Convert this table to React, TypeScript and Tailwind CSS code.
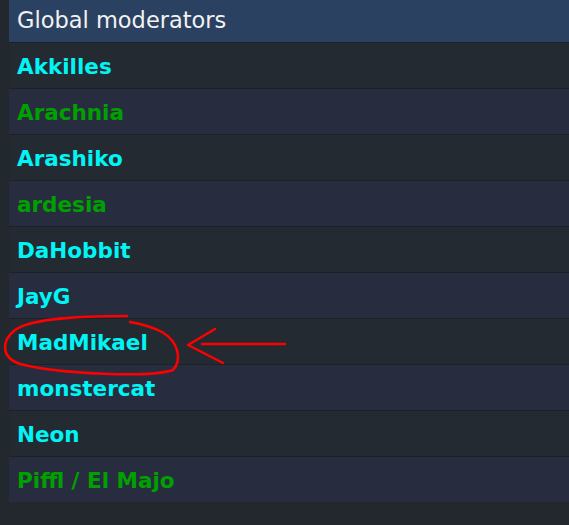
const moderators = [
  { name: "Akkilles", color: "text-[#00f5f5]" },
  { name: "Arachnia", color: "text-[#00a000]" },
  { name: "Arashiko", color: "text-[#00f5f5]" },
  { name: "ardesia", color: "text-[#00a000]" },
  { name: "DaHobbit", color: "text-[#00f5f5]" },
  { name: "JayG", color: "text-[#00f5f5]" },
  { name: "MadMikael", color: "text-[#00f5f5]" },
  { name: "monstercat", color: "text-[#00f5f5]" },
  { name: "Neon", color: "text-[#00f5f5]" },
  { name: "Piffl / El Majo", color: "text-[#00a000]" },
]

export default function App() {
  return (
    <div className="relative w-[569px] h-[525px] overflow-hidden bg-[#23282f] pl-[9px] font-['DejaVu_Sans',Verdana,sans-serif]">
      <div className="flex flex-col">
        <div className="h-[42px] flex items-center px-2 bg-[#2b4162] text-[#f2f2f2] text-[22.5px]">
          Global moderators
        </div>
        {moderators.map((m, i) => (
          <div
            key={m.name}
            className={
              "h-[46px] flex items-center px-2 pt-[3px] border-t border-[#1c2027] " +
              (i % 2 === 0 ? "bg-[#232a32]" : "bg-[#272d3e]")
            }
          >
            <span className={"font-bold text-[21.5px] " + m.color}>{m.name}</span>
          </div>
        ))}
      </div>

      {/* red annotation */}
      <svg className="absolute inset-0 pointer-events-none" width="569" height="525">
        <path
          d="M127,316 C80,316 32,318 15,330 C0,342 2,358 20,364 C60,374 150,378 173,370 C182,360 179,342 162,332 C152,327 142,324 130,322"
          fill="none"
          stroke="#f00"
          strokeWidth="2.5"
          strokeLinecap="round"
        />
        <path d="M202,344 L285,344" stroke="#f00" strokeWidth="2.5" strokeLinecap="round" />
        <path
          d="M215,329 L188,345 L223,363"
          fill="none"
          stroke="#f00"
          strokeWidth="2.5"
          strokeLinecap="round"
          strokeLinejoin="round"
        />
      </svg>
    </div>
  )
}
